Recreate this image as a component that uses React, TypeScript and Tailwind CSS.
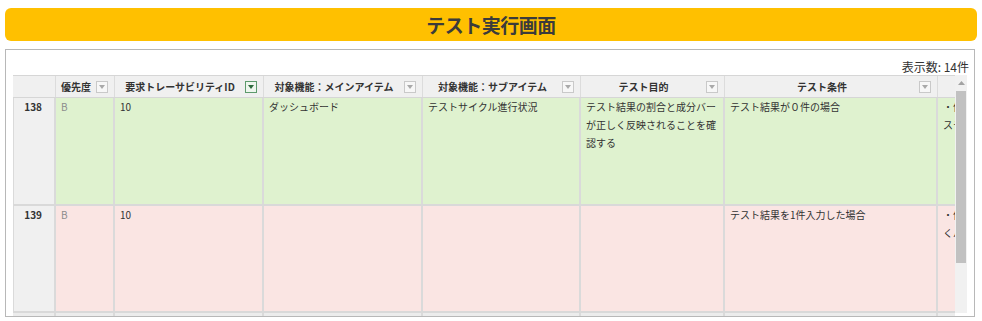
import React from "react";

type Col = { key: string; label: string; width: string; filter?: "on" | "off" };

const COLS: Col[] = [
    { key: "no", label: "", width: "w-[43px]" },
    { key: "priority", label: "優先度", width: "w-[59px]", filter: "off" },
    { key: "req", label: "要求トレーサビリティID", width: "w-[149px]", filter: "on" },
    { key: "main", label: "対象機能：メインアイテム", width: "w-[159px]", filter: "off" },
    { key: "sub", label: "対象機能：サブアイテム", width: "w-[158px]", filter: "off" },
    { key: "purpose", label: "テスト目的", width: "w-[144px]", filter: "off" },
    { key: "cond", label: "テスト条件", width: "w-[213px]", filter: "off" },
    { key: "expect", label: "", width: "w-[160px]" },
];

type Row = {
    no: number;
    tone: "ok" | "ng";
    cells: Record<string, string[]>;
};

const ROWS: Row[] = [
    {
        no: 138,
        tone: "ok",
        cells: {
            priority: ["B"],
            req: ["10"],
            main: ["ダッシュボード"],
            sub: ["テストサイクル進行状況"],
            purpose: ["テスト結果の割合と成分バー", "が正しく反映されることを確", "認する"],
            cond: ["テスト結果が０件の場合"],
            expect: ["・件数が０件と表示され", "ステータスバーが空"],
        },
    },
    {
        no: 139,
        tone: "ng",
        cells: {
            priority: ["B"],
            req: ["10"],
            main: [],
            sub: [],
            purpose: [],
            cond: ["テスト結果を1件入力した場合"],
            expect: ["・件数が1件と表示され", "くバーに反映されること"],
        },
    },
];

function FilterIcon({ active }: { active?: boolean }) {
    return (
        <span
            className={
                active
                    ? "flex h-[12px] w-[12px] shrink-0 items-center justify-center border border-[#5d9a6c] bg-[#eef6ee]"
                    : "flex h-[12px] w-[12px] shrink-0 items-center justify-center border border-[#c9c9c9] bg-[#f7f7f7]"
            }
        >
            <svg width="6" height="4" viewBox="0 0 6 4">
                <path d="M0 0 L6 0 L3 4 Z" fill={active ? "#2f6b3e" : "#a9a9a9"} />
            </svg>
        </span>
    );
}

export default function App() {
    return (
        <div
            className="h-[321px] w-[982px] overflow-hidden bg-white text-[#333]"
            style={{ fontFamily: '"Noto Sans CJK JP", "Liberation Sans", sans-serif' }}
        >
            <div className="mx-[5px] mt-[8px] flex h-[33px] items-center justify-center rounded-[6px] bg-[#ffc000]">
                <h1 className="text-[19px] leading-none font-bold tracking-[-0.5px] text-[#3b3b3b]">テスト実行画面</h1>
            </div>

            <div className="mt-[8px] ml-[5px] h-[268px] w-[970px] overflow-hidden border border-[#b8b8b8] pl-[7px]">
                <div className="flex h-[25px] items-end justify-end pr-[5px] pb-[1px] text-[12px] leading-[14px] text-[#333]">
                    表示数: 14件
                </div>

                <div className="flex">
                    <div className="w-[942px] overflow-hidden">
                        {/* header */}
                        <div className="flex h-[23px] w-max border-t border-b border-[#d6d6d6] bg-[#f0f0f0]">
                            {COLS.map((c) => (
                                <div
                                    key={c.key}
                                    className={`${c.width} flex shrink-0 items-center border-r border-[#dcdcdc] pr-[6px]`}
                                >
                                    <span className="flex-1 text-center text-[10px] leading-none font-bold whitespace-nowrap text-[#333]">
                                        {c.label}
                                    </span>
                                    {c.filter && <FilterIcon active={c.filter === "on"} />}
                                </div>
                            ))}
                        </div>

                        {/* body */}
                        {ROWS.map((r) => (
                            <div
                                key={r.no}
                                className={
                                    r.tone === "ok"
                                        ? "flex h-[108px] w-max border-b-2 border-[#d9d9d9] bg-[#dff2cf]"
                                        : "flex h-[107px] w-max border-b-2 border-[#d9d9d9] bg-[#fae5e3]"
                                }
                            >
                                {COLS.map((c) =>
                                    c.key === "no" ? (
                                        <div
                                            key={c.key}
                                            className={`${c.width} shrink-0 border-r-2 border-l border-[#dadada] bg-[#f0f0f0] pr-[12px] text-right text-[10px] leading-[18px] font-bold`}
                                        >
                                            {r.no}
                                        </div>
                                    ) : (
                                        <div
                                            key={c.key}
                                            className={`${c.width} shrink-0 overflow-hidden border-r-2 border-[#dadada] px-[5px] text-[10px] leading-[18px] ${
                                                c.key === "priority" ? "text-[#8c8c8c]" : "text-[#333]"
                                            }`}
                                        >
                                            {(r.cells[c.key] || []).map((line, i) => (
                                                <div key={i} className="whitespace-nowrap">
                                                    {line}
                                                </div>
                                            ))}
                                        </div>
                                    )
                                )}
                            </div>
                        ))}

                        <div className="flex h-[10px] w-max bg-[#ececec]">
                            {COLS.map((c) => (
                                <div key={c.key} className={`${c.width} shrink-0 border-r-2 border-[#dadada]`} />
                            ))}
                        </div>
                    </div>

                    {/* scrollbar */}
                    <div className="flex h-[238px] w-[12px] flex-col items-center bg-[#f1f1f1]">
                        <div className="flex h-[16px] w-full items-center justify-center">
                            <svg width="7" height="4" viewBox="0 0 7 4">
                                <path d="M0 4 L7 4 L3.5 0 Z" fill="#a3a3a3" />
                            </svg>
                        </div>
                        <div className="h-[172px] w-[10px] bg-[#c1c1c1]" />
                    </div>
                </div>
            </div>
        </div>
    );
}
